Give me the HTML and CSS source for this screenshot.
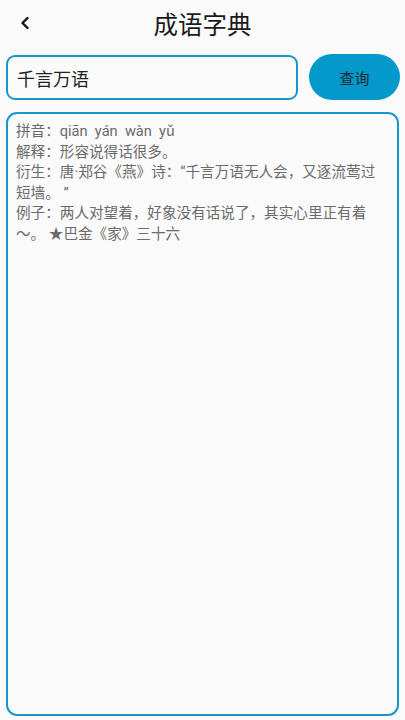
FILE: index.html
```html
<!DOCTYPE html>
<html lang="zh-CN">
<head>
    <meta charset="UTF-8"><title>成语字典</title>
    <link rel="stylesheet" href="styles.css">
</head>
<body>
<div class="page">
    <div class="header">
        <div class="backButton">
            <svg width="12" height="14" viewBox="0 0 12 14">
                <path d="M8.5 2 L3.5 7 L8.5 12" fill="none" stroke="#111" stroke-width="2.4" stroke-linecap="round" stroke-linejoin="round"/>
            </svg>
        </div>
        <div id="title">成语字典</div>
        <div></div>
    </div>

    <div class="searchRow">
        <div class="searchInput">千言万语</div>
        <div class="button">查询</div>
    </div>

    <div class="resultBox">
        <div class="resultText">拼音：qiān  yán  wàn  yǔ
解释：形容说得话很多。
衍生：唐·郑谷《燕》诗：“千言万语无人会，又逐流莺过短墙。 ”
例子：两人对望着，好象没有话说了，其实心里正有着～。 ★巴金《家》三十六</div>
    </div>
</div>
</body>
</html>
```

FILE: styles.css
```css
html {
    font-family: Roboto, "Noto Sans CJK SC", sans-serif;
}
body {
    margin: 0;
    background-color: #fafafa;
}
.page {
    display: flex;
    flex-direction: column;
    width: 405px;
    height: 720px;
}
.header {
    display: grid;
    grid-template-columns: 46px 1fr 46px;
    align-items: center;
    height: 46px;
}
.backButton {
    display: flex;
    justify-content: center;
    padding-left: 3px;
    padding-bottom: 1px;
}
#title {
    text-align: center;
    font-size: 24.5px;
    color: #1a1a1a;
    font-family: "Noto Sans CJK SC", sans-serif;
}
.searchRow {
    display: flex;
    column-gap: 11px;
    align-items: stretch;
    margin: 8px 5px 0 6px;
    height: 46px;
}
.searchInput {
    flex: 1;
    display: flex;
    align-items: center;
    margin-top: 1px;
    padding-left: 9px;
    border: 2px solid #1898c9;
    border-radius: 9px;
    font-size: 18px;
    color: #222;
    font-family: "Noto Sans CJK SC", sans-serif;
}
.button {
    width: 91px;
    display: flex;
    justify-content: center;
    align-items: center;
    background-color: #0599cb;
    border-radius: 23px;
    font-size: 15px;
    color: #1c2a33;
    font-family: "Noto Sans CJK SC", sans-serif;
}
.resultBox {
    flex: 1;
    margin: 12px 6px 4px 6px;
    border: 2px solid #1898c9;
    border-radius: 11px;
    padding: 7px 12px 0 8px;
}
.resultText {
    white-space: pre-wrap;
    font-size: 14.6px;
    line-height: 20.6px;
    color: #6b6b6b;
}
```
